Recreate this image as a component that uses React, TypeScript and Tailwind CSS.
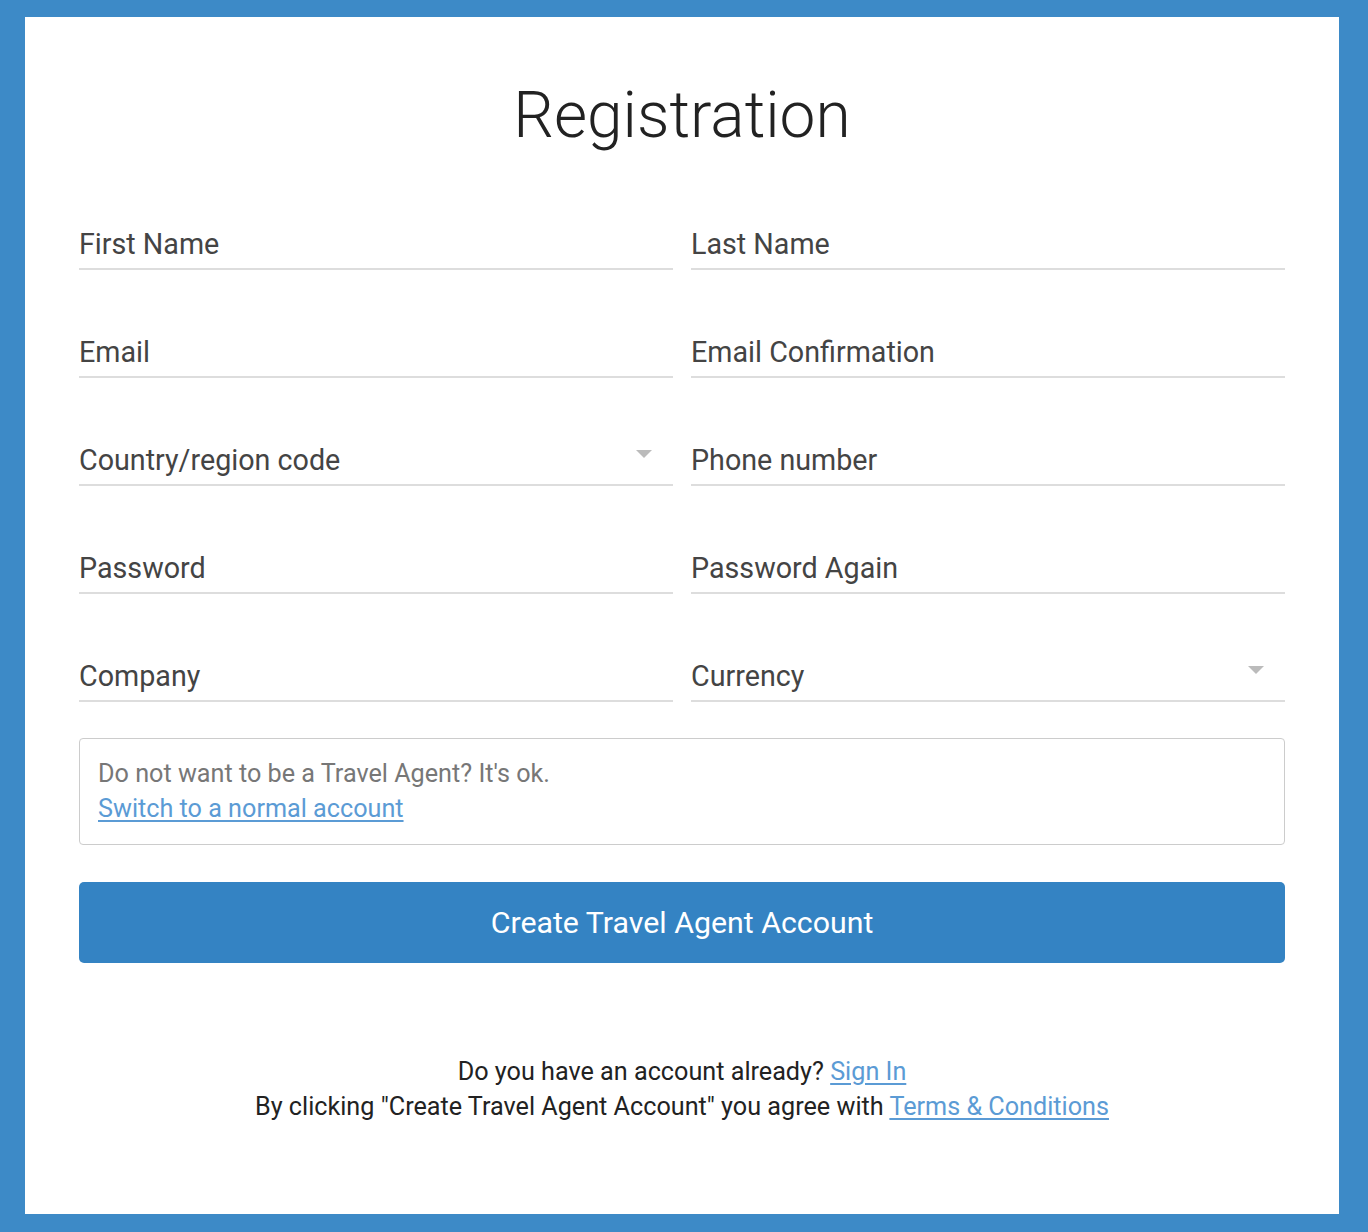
import React from "react";

function Field({ label, select }: { label: string; select?: boolean }) {
  return (
    <div className="relative flex h-[54px] items-end border-b-2 border-[#dddddd] pb-[7px]">
      <span className="text-[28.7px] leading-[34px] text-[#444444]">{label}</span>
      {select && (
        <span className="absolute right-[21px] top-[18px] h-0 w-0 border-x-[8px] border-t-[8px] border-x-transparent border-t-[#bbbbbb]" />
      )}
    </div>
  );
}

export default function App() {
  return (
    <div
      className="min-h-[1232px] w-full bg-[#3d8ac7] pb-[18px] pl-[25px] pr-[29px] pt-[17px]"
      style={{ fontFamily: "Roboto, 'Open Sans', sans-serif" }}
    >
      <div className="flex h-[1197px] flex-col bg-white px-[54px]">
        <h1 className="mt-[59px] text-center text-[64px] font-light leading-[80px] text-[#222222]">
          Registration
        </h1>
        <div className="mt-[60px] grid grid-cols-2 gap-x-[18px] gap-y-[54px]">
          <Field label="First Name" />
          <Field label="Last Name" />
          <Field label="Email" />
          <Field label="Email Confirmation" />
          <Field label="Country/region code" select />
          <Field label="Phone number" />
          <Field label="Password" />
          <Field label="Password Again" />
          <Field label="Company" />
          <Field label="Currency" select />
        </div>
        <div className="mt-[36px] flex h-[107px] flex-col justify-center rounded-[4px] border border-[#cccccc] px-[18px] pb-[2px]">
          <p className="text-[25.2px] leading-[35px] text-[#777777]">
            Do not want to be a Travel Agent? It's ok.
          </p>
          <a href="#" className="text-[25.2px] leading-[35px] text-[#5b9bd5] underline underline-offset-[3px]">
            Switch to a normal account
          </a>
        </div>
        <button className="mt-[37px] h-[81px] w-full rounded-[5px] bg-[#3483c3] text-[30.3px] text-white">
          Create Travel Agent Account
        </button>
        <div className="mt-[91px] text-center text-[25.2px] leading-[35px] text-[#222222]">
          <p>
            Do you have an account already?{" "}
            <a href="#" className="text-[#5b9bd5] underline underline-offset-[3px]">
              Sign In
            </a>
          </p>
          <p>
            By clicking "Create Travel Agent Account" you agree with{" "}
            <a href="#" className="text-[#5b9bd5] underline underline-offset-[3px]">
              Terms &amp; Conditions
            </a>
          </p>
        </div>
      </div>
    </div>
  );
}
